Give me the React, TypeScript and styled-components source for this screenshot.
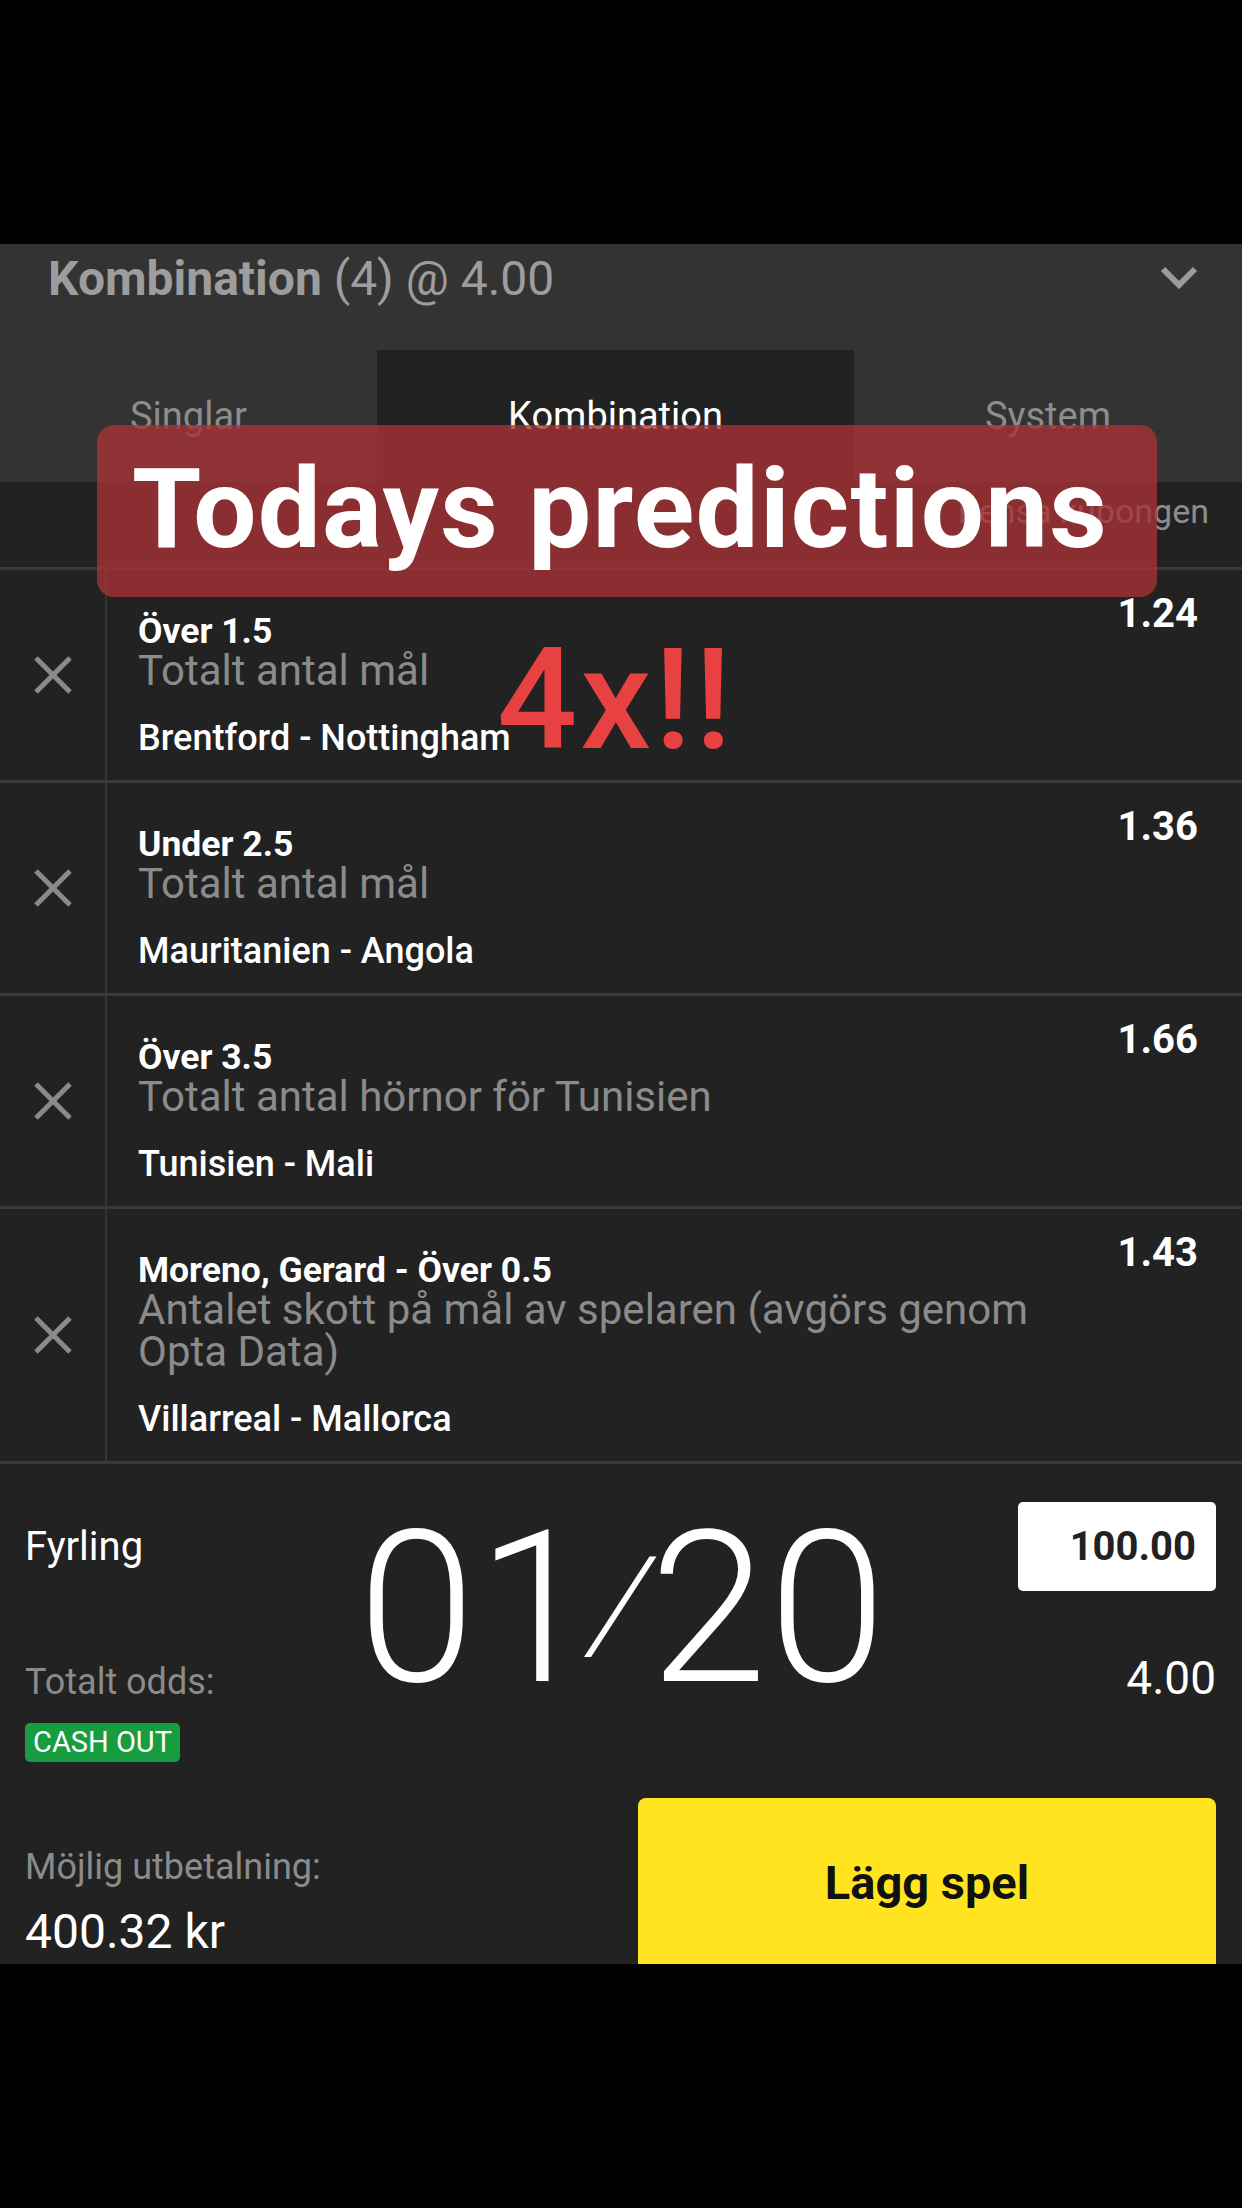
import styled, { createGlobalStyle } from 'styled-components';

const GlobalStyle = createGlobalStyle`
  html, body {
    margin: 0;
    padding: 0;
    background: #000;
  }
  * {
    box-sizing: border-box;
  }
`;

const FONT = `Roboto, "Liberation Sans", Arial, sans-serif`;

const Page = styled.div`
  position: relative;
  width: 1242px;
  height: 2208px;
  padding-top: 244px;
  background: #000;
  font-family: ${FONT};
  overflow: hidden;
`;

const Slip = styled.div`
  height: 1720px;
  background: #222;
  overflow: hidden;
`;

const Header = styled.div`
  background: #333;
`;

const HeaderTop = styled.div`
  display: flex;
  align-items: center;
  justify-content: space-between;
  height: 68px;
  padding: 0 44px 0 48px;
`;

const HeaderTitle = styled.div`
  font-size: 48px;
  color: #9d9d9d;
  font-weight: 400;

  b {
    font-weight: 700;
  }
`;

const Tabs = styled.div`
  display: grid;
  grid-template-columns: 377px 477px 1fr;
  height: 132px;
  margin-top: 38px;
`;

const Tab = styled.div<{ $active?: boolean }>`
  display: flex;
  align-items: center;
  justify-content: center;
  font-size: 38px;
  color: ${p => (p.$active ? '#fff' : '#8d8d8d')};
  background: ${p => (p.$active ? '#222' : 'transparent')};
`;

const ClearRow = styled.div`
  display: flex;
  justify-content: flex-end;
  height: 88px;
  padding: 9px 33px 0 0;
  border-bottom: 3px solid #3a3a3a;
  font-size: 34px;
  line-height: 40px;
  color: #8d8d8d;
`;

const BetRow = styled.div`
  display: flex;
  border-bottom: 3px solid #3a3a3a;
`;

const RemoveCell = styled.div`
  display: flex;
  align-items: center;
  justify-content: center;
  width: 107px;
  flex-shrink: 0;
  border-right: 2px solid #363636;
`;

const BetBody = styled.div`
  flex: 1;
  padding: 45px 0 26px 31px;
`;

const Selection = styled.div`
  font-size: 35.5px;
  line-height: 32px;
  font-weight: 700;
  color: #fff;
`;

const Market = styled.div`
  max-width: 930px;
  margin-top: 3px;
  font-size: 42px;
  line-height: 42px;
  color: #8b8b8b;
`;

const Match = styled.div`
  margin-top: 30px;
  font-size: 36px;
  line-height: 32px;
  font-weight: 500;
  color: #fff;
`;

const Odds = styled.div`
  flex-shrink: 0;
  padding: 22px 44px 0 0;
  font-size: 40px;
  line-height: 44px;
  font-weight: 700;
  color: #fff;
`;

const Footer = styled.div`
  display: flex;
  flex-direction: column;
  padding: 38px 26px 0 25px;
`;

const FooterLine = styled.div<{ $align?: string }>`
  display: flex;
  justify-content: space-between;
  align-items: ${p => p.$align || 'center'};
`;

const Label = styled.div<{ $muted?: boolean; $size?: number }>`
  font-size: ${p => p.$size || 40}px;
  color: ${p => (p.$muted ? '#8b8b8b' : '#fff')};
`;

const StakeBox = styled.div`
  display: flex;
  align-items: center;
  justify-content: flex-end;
  width: 198px;
  height: 89px;
  padding-right: 20px;
  border-radius: 5px;
  background: #fff;
  color: #222;
  font-size: 40px;
  font-weight: 700;
`;

const OddsLine = styled(FooterLine)`
  margin-top: 60px;
  line-height: 1.2;
`;

const CashOut = styled.div`
  align-self: flex-start;
  margin-top: 17px;
  height: 39px;
  padding: 0 8px;
  border-radius: 5px;
  background: #179c3f;
  color: #fff;
  font-size: 29px;
  line-height: 39px;
`;

const PayoutLine = styled(FooterLine)`
  margin-top: 36px;
`;

const Payout = styled.div`
  display: flex;
  flex-direction: column;
  padding-top: 47px;
  line-height: 44px;
`;

const PayoutAmount = styled.div`
  margin-top: 17px;
  font-size: 48px;
  line-height: 52px;
  color: #fff;
`;

const PlaceButton = styled.button`
  display: flex;
  align-items: center;
  justify-content: center;
  width: 578px;
  height: 168px;
  border: none;
  border-radius: 8px 8px 0 0;
  background: #ffe41f;
  color: #111;
  font-family: ${FONT};
  font-size: 47px;
  font-weight: 700;
`;

/* video captions drawn over the screenshot */
const CaptionBox = styled.div`
  position: absolute;
  left: 97px;
  top: 425px;
  width: 1060px;
  height: 172px;
  padding: 28px 0 0 35px;
  border-radius: 17px;
  background: rgba(168, 50, 54, 0.78);
  color: #fff;
  font-size: 112px;
  line-height: 1;
  font-weight: 700;
  letter-spacing: 1.3px;
  white-space: nowrap;
`;

const BigRed = styled.div`
  position: absolute;
  left: 497px;
  top: 629px;
  font-size: 141px;
  line-height: 1;
  letter-spacing: 3px;
  color: #e84141;
  font-weight: 500;
`;

const Counter = styled.div`
  position: absolute;
  left: 358px;
  top: 1504px;
  font-size: 211px;
  line-height: 1;
  font-weight: 300;
  letter-spacing: 2px;
  color: #fff;
  white-space: nowrap;
`;

const Slash = styled.span`
  display: inline-block;
  font-size: 130px;
  vertical-align: 32px;
  transform: skewX(-15deg);
`;

const CloseIcon = () => (
  <svg width="40" height="40" viewBox="0 0 40 40">
    <path d="M3 3 L37 37 M37 3 L3 37" stroke="#8a8a8a" strokeWidth="5" fill="none" />
  </svg>
);

const Chevron = () => (
  <svg width="38" height="24" viewBox="0 0 38 24">
    <polyline points="3,3 19,19 35,3" stroke="#9b9b9b" strokeWidth="6" fill="none" />
  </svg>
);

const bets = [
  { pick: 'Över 1.5', market: 'Totalt antal mål', match: 'Brentford - Nottingham', odds: '1.24' },
  { pick: 'Under 2.5', market: 'Totalt antal mål', match: 'Mauritanien - Angola', odds: '1.36' },
  { pick: 'Över 3.5', market: 'Totalt antal hörnor för Tunisien', match: 'Tunisien - Mali', odds: '1.66' },
  {
    pick: 'Moreno, Gerard - Över 0.5',
    market: 'Antalet skott på mål av spelaren (avgörs genom Opta Data)',
    match: 'Villarreal - Mallorca',
    odds: '1.43',
  },
];

export default function App() {
  return (
    <Page>
      <GlobalStyle />
      <Slip>
        <Header>
          <HeaderTop>
            <HeaderTitle>
              <b>Kombination</b> (4) @ 4.00
            </HeaderTitle>
            <Chevron />
          </HeaderTop>
          <Tabs>
            <Tab>Singlar</Tab>
            <Tab $active>Kombination</Tab>
            <Tab>System</Tab>
          </Tabs>
        </Header>

        <ClearRow>Rensa kupongen</ClearRow>

        {bets.map((bet, i) => (
          <BetRow key={i}>
            <RemoveCell>
              <CloseIcon />
            </RemoveCell>
            <BetBody>
              <Selection>{bet.pick}</Selection>
              <Market>{bet.market}</Market>
              <Match>{bet.match}</Match>
            </BetBody>
            <Odds>{bet.odds}</Odds>
          </BetRow>
        ))}

        <Footer>
          <FooterLine>
            <Label>Fyrling</Label>
            <StakeBox>100.00</StakeBox>
          </FooterLine>
          <OddsLine $align="baseline">
            <Label $muted $size={36}>Totalt odds:</Label>
            <Label $size={46}>4.00</Label>
          </OddsLine>
          <CashOut>CASH OUT</CashOut>
          <PayoutLine $align="flex-start">
            <Payout>
              <Label $muted $size={36}>Möjlig utbetalning:</Label>
              <PayoutAmount>400.32 kr</PayoutAmount>
            </Payout>
            <PlaceButton>Lägg spel</PlaceButton>
          </PayoutLine>
        </Footer>
      </Slip>

      <CaptionBox>Todays predictions</CaptionBox>
      <BigRed>4x!!</BigRed>
      <Counter>
        01<Slash>/</Slash>20
      </Counter>
    </Page>
  );
}
